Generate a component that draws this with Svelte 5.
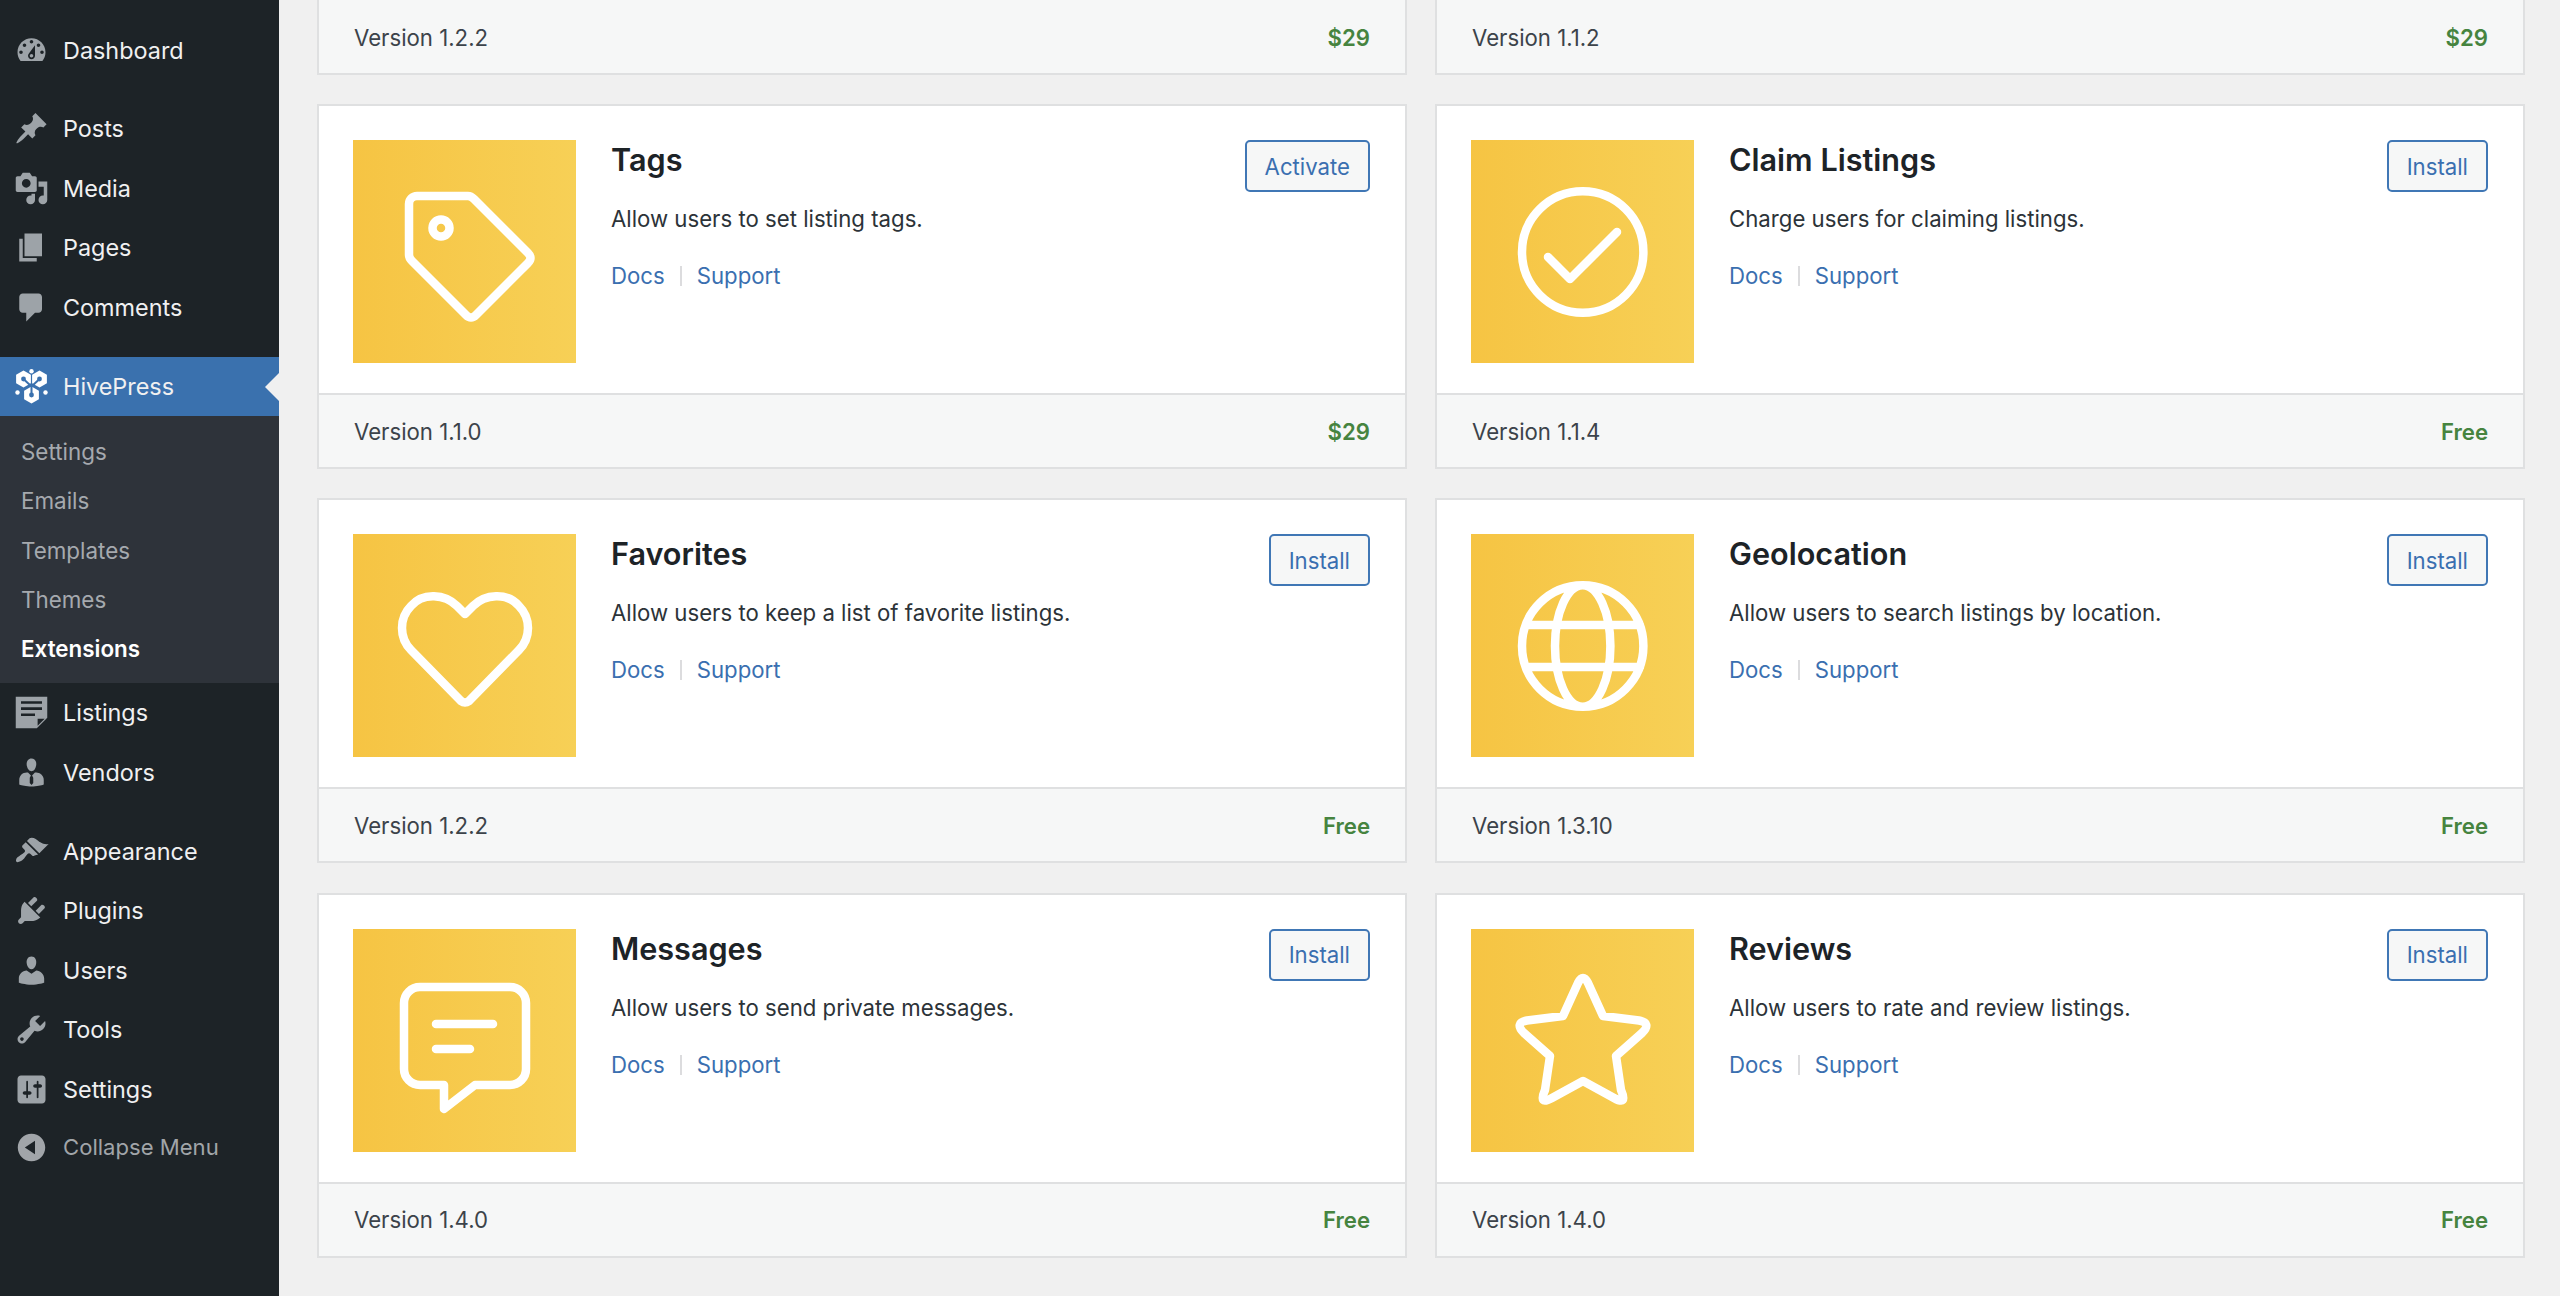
<script>
  // sidebar icons, dashicons paths on a 20x20 box
  const icons = {
    dashboard: 'M3.76 16h12.48c1.1-1.37 1.76-3.11 1.76-5 0-4.42-3.58-8-8-8s-8 3.58-8 8c0 1.89.66 3.63 1.76 5zM10 4c.55 0 1 .45 1 1s-.45 1-1 1-1-.45-1-1 .45-1 1-1zM6 6c.55 0 1 .45 1 1s-.45 1-1 1-1-.45-1-1 .45-1 1-1zm8 0c.55 0 1 .45 1 1s-.45 1-1 1-1-.45-1-1 .45-1 1-1zm-5.37 5.55L12 7v6c0 1.1-.9 2-2 2s-2-.9-2-2c0-.57.24-1.08.63-1.45zM4 10c.55 0 1 .45 1 1s-.45 1-1 1-1-.45-1-1 .45-1 1-1zm12 0c.55 0 1 .45 1 1s-.45 1-1 1-1-.45-1-1 .45-1 1-1zm-5 3c0-.55-.45-1-1-1s-1 .45-1 1 .45 1 1 1 1-.45 1-1z',
    pin: 'M10.44 3.02l1.82-1.82 6.36 6.35-1.83 1.82c-1.05-.68-2.48-.57-3.41.36l-.75.75c-.92.93-1.04 2.35-.35 3.41l-1.83 1.82-2.41-2.41-2.8 2.79c-.42.42-3.38 2.71-3.8 2.29s1.86-3.39 2.28-3.81l2.79-2.79L4.1 9.36l1.83-1.82c1.05.69 2.48.57 3.4-.36l.75-.75c.93-.92 1.05-2.35.36-3.41z',
    media: 'M13 11V4c0-.55-.45-1-1-1h-1.67L9 1H5L3.67 3H2c-.55 0-1 .45-1 1v7c0 .55.45 1 1 1h10c.55 0 1-.45 1-1zM7 4.5c1.38 0 2.5 1.12 2.5 2.5S8.38 9.5 7 9.5 4.5 8.38 4.5 7 5.62 4.5 7 4.5zM14 6h5v10.5c0 1.38-1.12 2.5-2.5 2.5S14 17.88 14 16.5s1.12-2.5 2.5-2.5c.17 0 .34.02.5.05V9h-3V6zm-4 8.05V13h2v3.5c0 1.38-1.12 2.5-2.5 2.5S7 17.88 7 16.5 8.12 14 9.5 14c.17 0 .34.02.5.05z',
    pages: 'M6 15V2h10v13H6zm-1 1h8v2H3V5h2v11z',
    comments: 'M5 2h9c1.1 0 2 .9 2 2v7c0 1.1-.9 2-2 2h-2l-5 5v-5H5c-1.1 0-2-.9-2-2V4c0-1.1.9-2 2-2z',
    listings: 'M1 1h18v12l-6 6H1V1zm3 2.5V5h12V3.5H4zm0 3.5v1.5h12V7H4zm0 3.5V12h8v-1.5H4zM17.5 13.5H13.5v4z',
    vendors: 'M7.3 6l-.03-.19c-.04-.37-.05-.73-.03-1.08.02-.36.1-.71.25-1.04.14-.32.31-.61.52-.86s.49-.46.83-.6c.34-.15.72-.23 1.13-.23.69 0 1.26.2 1.71.59s.76.87.91 1.44.18 1.16.09 1.78l-.03.19c-.01.09-.05.25-.11.48-.05.24-.12.47-.2.69-.08.21-.19.45-.34.72-.14.27-.3.49-.47.69-.18.19-.4.34-.67.48-.27.13-.55.19-.86.19s-.59-.06-.87-.19c-.26-.13-.49-.29-.67-.5-.18-.2-.34-.42-.49-.66-.15-.25-.26-.49-.34-.73-.09-.25-.16-.47-.21-.67-.06-.21-.1-.37-.12-.5zm9.2 6.24c.41.7.5 1.41.5 2.14v2.49c0 .03-.12.08-.29.13-.18.04-.42.13-.97.27-.55.12-1.1.24-1.65.34s-1.19.19-1.95.27c-.75.08-1.46.12-2.13.12-.68 0-1.39-.04-2.14-.12-.75-.07-1.4-.17-1.98-.27-.58-.11-1.08-.23-1.56-.34-.49-.11-.8-.21-1.06-.29L3 16.87v-2.49c0-.75.07-1.46.46-2.15s.81-1.25 1.5-1.68C5.66 10.12 7.19 10 8 10l1.67 1.67L9 13v3l1.02 1.08L11 16v-3l-.68-1.33L11.97 10c.77 0 2.2.07 2.9.52.71.45 1.21 1.02 1.63 1.72z',
    appearance: 'M14.48 11.06L7.41 3.99l1.5-1.5c.5-.56 2.3-.47 3.51.32 1.21.8 1.43 1.28 2.91 2.1 1.18.64 2.45 1.26 4.45.85zm-.71.71L6.7 4.7 4.93 6.47c-.39.39-.39 1.02 0 1.41l1.06 1.06c.39.39.39 1.03 0 1.42-.6.6-1.43 1.11-2.21 1.69-.35.26-.7.53-1.01.84C1.43 13.23.78 15.22 1.4 15.84c.61.62 2.6-.03 3.93-1.36.31-.31.58-.66.85-1.02.57-.78 1.08-1.61 1.69-2.21.39-.39 1.02-.39 1.41 0l1.06 1.06c.39.39 1.02.39 1.41 0z',
    plugins: 'M13.11 4.36L9.87 7.6 8 5.73l3.24-3.24c.35-.34 1.05-.2 1.56.32.52.51.66 1.21.31 1.55zm-8 1.77l.91-1.12 9.01 9.01-1.19.84c-.71.71-2.63 1.16-3.82 1.16H6.14L4.9 17.26c-.59.59-1.54.59-2.12 0-.59-.58-.59-1.53 0-2.12l1.24-1.24v-3.88c0-1.13.4-3.19 1.09-3.89zm7.26 3.97l3.24-3.24c.34-.35 1.04-.21 1.55.31.52.51.66 1.21.31 1.55l-3.24 3.25z',
    users: 'M10 9.25c-2.27 0-2.73-3.44-2.73-3.44C7 4.02 7.82 2 9.97 2c2.16 0 2.98 2.02 2.71 3.81 0 0-.41 3.44-2.68 3.44zm0 2.57L12.72 10c2.39 0 4.52 2.33 4.52 4.53v2.49s-3.65 1.13-7.24 1.13c-3.65 0-7.24-1.13-7.24-1.13v-2.49c0-2.25 1.94-4.48 4.47-4.48z',
    tools: 'M16.68 9.77c-1.34 1.34-3.3 1.67-4.95.99l-5.41 6.52c-.99.99-2.59.99-3.58 0s-.99-2.59 0-3.57l6.52-5.42c-.68-1.65-.35-3.61.99-4.95 1.28-1.28 3.12-1.62 4.72-1.06l-2.89 2.89 2.82 2.82 2.86-2.87c.53 1.58.18 3.39-1.08 4.65zM3.81 16.21c.4.39 1.04.39 1.43 0 .4-.4.4-1.04 0-1.43-.39-.4-1.03-.4-1.43 0-.39.39-.39 1.03 0 1.43z',
    settings: 'M18 16V4c0-1.1-.9-2-2-2H4c-1.1 0-2 .9-2 2v12c0 1.1.9 2 2 2h12c1.1 0 2-.9 2-2zM8 11h1c.55 0 1 .45 1 1s-.45 1-1 1H8v1.5c0 .28-.22.5-.5.5s-.5-.22-.5-.5V13H6c-.55 0-1-.45-1-1s.45-1 1-1h1V5.5c0-.28.22-.5.5-.5s.5.22.5.5V11zm5-2h-1c-.55 0-1-.45-1-1s.45-1 1-1h1V5.5c0-.28.22-.5.5-.5s.5.22.5.5V7h1c.55 0 1 .45 1 1s-.45 1-1 1h-1v5.5c0 .28-.22.5-.5.5s-.5-.22-.5-.5V9z',
    collapse: 'M10 2.16c4.33 0 7.84 3.51 7.84 7.84s-3.51 7.84-7.84 7.84S2.16 14.33 2.16 10 5.71 2.16 10 2.16zm2 11.72V6.12L6.18 9.97z'
  };

  const topMenu = [{ label: 'Dashboard', icon: 'dashboard' }];
  const contentMenu = [
    { label: 'Posts', icon: 'pin' },
    { label: 'Media', icon: 'media' },
    { label: 'Pages', icon: 'pages' },
    { label: 'Comments', icon: 'comments' }
  ];
  const subMenu = ['Settings', 'Emails', 'Templates', 'Themes', 'Extensions'];
  const pluginMenu = [
    { label: 'Listings', icon: 'listings' },
    { label: 'Vendors', icon: 'vendors' }
  ];
  const adminMenu = [
    { label: 'Appearance', icon: 'appearance' },
    { label: 'Plugins', icon: 'plugins' },
    { label: 'Users', icon: 'users' },
    { label: 'Tools', icon: 'tools' },
    { label: 'Settings', icon: 'settings' }
  ];

  // tile artwork, stroked on a 223x223 box
  const art = {
    tag: 'M56 64a8 8 0 0 1 8-8H115q3 0 6 3L175 113q5 5 0 10L123 175q-5 5-10 0L59 121q-3-3-3-6ZM79.5 88a8.5 8.5 0 1 0 17 0a8.5 8.5 0 1 0-17 0Z',
    check: 'M51 112a60.7 60.7 0 1 0 121.4 0a60.7 60.7 0 1 0-121.4 0ZM77 117L99 139L146 92',
    heart: 'M112 80L104 72C92 60 70 58 58 72C46 84 46 104 58 116L108 167Q112 170 116 167L166 116C178 104 178 84 166 72C154 58 132 60 120 72Z',
    globe: 'M51 112a60.7 60.7 0 1 0 121.4 0a60.7 60.7 0 1 0-121.4 0ZM84 112a27.7 60.7 0 1 0 55.4 0a27.7 60.7 0 1 0-55.4 0ZM55 91H169M55 133H169',
    message: 'M67 58H157a16 16 0 0 1 16 16V140a16 16 0 0 1-16 16H122L91 180V156H67a16 16 0 0 1-16-16V74a16 16 0 0 1 16-16ZM83 95H140M83 120H117',
    star: 'M92 87L107 54Q112 44 117 54L132 87L168 91.5Q181 94 171 104L145 127L150 161Q157 177 143 169L112 152L81 169Q67 177 74 161L79 127L53 104Q43 94 56 91.5Z'
  };

  const strips = [
    { version: '1.2.2', price: '$29' },
    { version: '1.1.2', price: '$29' }
  ];

  const addons = [
    { name: 'Tags', text: 'Allow users to set listing tags.', action: 'Activate', version: '1.1.0', price: '$29', art: 'tag' },
    { name: 'Claim Listings', text: 'Charge users for claiming listings.', action: 'Install', version: '1.1.4', price: 'Free', art: 'check' },
    { name: 'Favorites', text: 'Allow users to keep a list of favorite listings.', action: 'Install', version: '1.2.2', price: 'Free', art: 'heart' },
    { name: 'Geolocation', text: 'Allow users to search listings by location.', action: 'Install', version: '1.3.10', price: 'Free', art: 'globe' },
    { name: 'Messages', text: 'Allow users to send private messages.', action: 'Install', version: '1.4.0', price: 'Free', art: 'message' },
    { name: 'Reviews', text: 'Allow users to rate and review listings.', action: 'Install', version: '1.4.0', price: 'Free', art: 'star' }
  ];
</script>

{#snippet menuItem(item)}
  <a class="menu-item" href="#top">
    <svg class="menu-icon" viewBox="0 0 20 20"><path fill-rule="evenodd" d={icons[item.icon]} /></svg>
    <span>{item.label}</span>
  </a>
{/snippet}

{#snippet footer(item)}
  <div class="card-footer">
    <span>Version {item.version}</span>
    <strong>{item.price}</strong>
  </div>
{/snippet}

<div class="page">
  <nav class="sidebar">
    <div class="group">
      {#each topMenu as item}{@render menuItem(item)}{/each}
    </div>
    <div class="group">
      {#each contentMenu as item}{@render menuItem(item)}{/each}
    </div>
    <div class="group">
      <a class="menu-item current" href="#top">
        <svg class="menu-icon" viewBox="0 0 34 35">
          <path d="M9 1.5L16.4 5.75V14.25L9 18.5L1.6 14.25V5.75Z" />
          <path d="M25 1.5L32.4 5.75V14.25L25 18.5L17.6 14.25V5.75Z" />
          <path d="M17 17.5L24.4 21.75V30.25L17 34.5L9.6 30.25V21.75Z" />
          <path class="slot" d="M17 17.5L9 10M17 17.5L25 10M17 17.5V26" />
          <circle class="hole" cx="9" cy="10" r="2.4" />
          <circle class="hole" cx="25" cy="10" r="2.4" />
          <circle class="hole" cx="17" cy="26" r="2.4" />
          <circle cx="17" cy="2.2" r="2.2" />
          <circle cx="3" cy="23.5" r="2.2" />
          <circle cx="31" cy="23.5" r="2.2" />
        </svg>
        <span>HivePress</span>
      </a>
      <ul class="submenu">
        {#each subMenu as label}
          <li class:active={label === 'Extensions'}>{label}</li>
        {/each}
      </ul>
      {#each pluginMenu as item}{@render menuItem(item)}{/each}
    </div>
    <div class="group">
      {#each adminMenu as item}{@render menuItem(item)}{/each}
      <div class="menu-item collapse">
        <svg class="menu-icon" viewBox="0 0 20 20"><path fill-rule="evenodd" d={icons.collapse} /></svg>
        <span>Collapse Menu</span>
      </div>
    </div>
  </nav>

  <main class="grid">
    {#each strips as strip}
      <section class="card strip">{@render footer(strip)}</section>
    {/each}

    {#each addons as addon}
      <section class="card">
        <div class="card-body">
          <svg class="tile" viewBox="0 0 223 223">
            <path d={art[addon.art]} />
          </svg>
          <div class="card-text">
            <h3>{addon.name}</h3>
            <p>{addon.text}</p>
            <div class="links">
              <a href="#top">Docs</a>
              <i></i>
              <a href="#top">Support</a>
            </div>
          </div>
          <button>{addon.action}</button>
        </div>
        {@render footer(addon)}
      </section>
    {/each}
  </main>
</div>

<style>
  :global(body) {
    background: #f0f0f0;
    font-family: Inter, "Liberation Sans", sans-serif;
    font-size: 22.2px;
    color: #2c3338;
  }

  .page {
    display: flex;
    height: 1296px;
    overflow: hidden;
  }

  .sidebar {
    flex: 0 0 279px;
    box-sizing: border-box;
    padding-top: 21px;
    background: #1d2327;
    font-size: 23.4px;
  }
  .group + .group {
    margin-top: 19.4px;
  }
  .group:nth-child(2) {
    margin-top: 18.4px;
  }
  .menu-item {
    position: relative;
    display: flex;
    align-items: center;
    gap: 14px;
    height: 59.6px;
    padding-left: 14px;
    color: #f0f0f1;
    text-decoration: none;
  }
  .menu-icon {
    flex: 0 0 35px;
    width: 35px;
    height: 35px;
    fill: #9da3a8;
  }
  .current {
    background: #3a71ae;
  }
  .current .menu-icon {
    fill: #fff;
  }
  .slot {
    fill: none;
    stroke: #3a71ae;
    stroke-width: 2;
  }
  .current .menu-icon .hole {
    fill: #3a71ae;
  }
  .current::after {
    content: "";
    position: absolute;
    right: 0;
    top: 16px;
    border: solid transparent;
    border-width: 14px 14px 14px 0;
    border-right-color: #f0f0f0;
  }
  .collapse {
    height: 56px;
    color: #a1a5a9;
    font-size: 22.1px;
  }
  .collapse .menu-icon {
    fill: #a1a5a9;
  }

  .submenu {
    margin: 0;
    padding: 10.5px 0 9px 21px;
    list-style: none;
    background: #2e333a;
    color: #a5a9ae;
    font-size: 22.4px;
  }
  .submenu li {
    height: 49.4px;
    line-height: 49.4px;
  }
  .submenu .active {
    color: #fff;
    font-weight: 600;
  }

  .grid {
    flex: 1;
    display: grid;
    grid-template-columns: 1090px 1090px;
    grid-template-rows: 75px repeat(3, 365px);
    gap: 29.2px 28px;
    padding-left: 38px;
  }

  .card {
    display: flex;
    flex-direction: column;
    box-sizing: border-box;
    background: #fff;
    border: 2px solid #dfe0e1;
  }
  .strip {
    border-top: 0;
    justify-content: flex-end;
  }

  .card-body {
    flex: 1;
    display: flex;
    align-items: flex-start;
    min-height: 0;
    padding: 34px 35px 30px 34px;
  }
  .tile {
    flex: 0 0 223px;
    width: 223px;
    height: 223px;
    background: linear-gradient(90deg, #f6c443, #f7d056);
  }
  .tile path {
    fill: none;
    stroke: #fff;
    stroke-width: 8.5;
    stroke-linecap: round;
    stroke-linejoin: round;
  }
  .card-text {
    flex: 1;
    padding-left: 35px;
  }
  h3 {
    margin: 0;
    color: #1d2327;
    font-size: 30.6px;
    font-weight: 600;
    line-height: 40px;
  }
  p {
    margin: 23px 0 0;
    line-height: 32px;
  }
  .links {
    display: flex;
    align-items: center;
    gap: 15px;
    margin-top: 25px;
    line-height: 32px;
  }
  .links a {
    color: #3a6fb0;
    text-decoration: none;
  }
  .links i {
    width: 2px;
    height: 20px;
    background: #dcdcde;
  }

  button {
    height: 52px;
    padding: 0 18px;
    background: #f6f7f7;
    border: 2px solid #4077b5;
    border-radius: 5px;
    color: #3a6fb0;
    font: inherit;
  }

  .card-footer {
    flex: 0 0 74px;
    display: flex;
    align-items: center;
    justify-content: space-between;
    box-sizing: border-box;
    padding: 0 35px;
    background: #f6f7f7;
    border-top: 2px solid #dfe0e1;
    color: #3c434a;
  }
  .strip .card-footer {
    flex-basis: 73px;
    padding-top: 2px;
    border-top: 0;
  }
  .card-footer strong {
    color: #46843f;
    font-weight: 600;
  }
</style>
